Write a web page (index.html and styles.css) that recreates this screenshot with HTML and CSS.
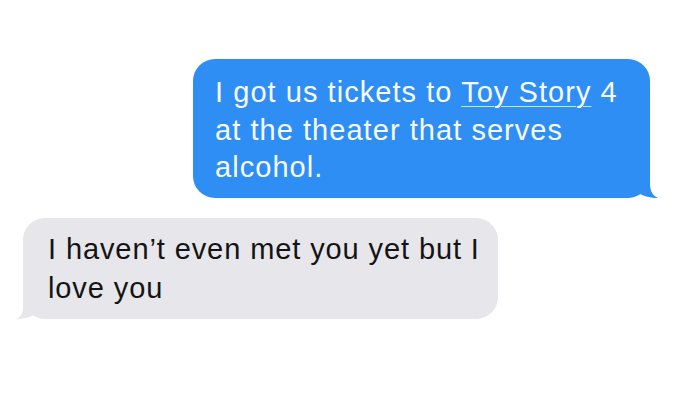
FILE: index.html
```html
<!DOCTYPE html>
<html>
<head>
<meta charset="utf-8">
<link rel="stylesheet" href="styles.css">
</head>
<body>
<div class="thread">
  <div class="bubble out">I got us tickets to <span class="link">Toy Story</span> 4 at the theater that serves alcohol.<svg class="tail tail-out" width="30" height="26" viewBox="0 0 30 26"><path d="M0 0 L22 0 L22 12 C22 19 25 24 30 26 C23 26 15 24 10 21 C7 23 4 25 0 26 Z"/></svg></div>
  <div class="bubble in">I haven’t even met you yet but I love you<svg class="tail tail-in" width="28" height="24" viewBox="0 0 28 24"><path d="M28 0 L8 0 L8 12 C8 18 6 22 1 24 C8 24 15 22 19 20 C22 22 25 23 28 24 Z"/></svg></div>
</div>
</body>
</html>
```
FILE: styles.css
```css
html, body {
  margin: 0;
  padding: 0;
  background: #ffffff;
}
.thread {
  width: 700px;
  height: 405px;
  display: flex;
  flex-direction: column;
  padding-top: 59px;
  box-sizing: border-box;
  font-family: "Liberation Sans", Arial, sans-serif;
  font-size: 29px;
  letter-spacing: 0.9px;
  line-height: 37.5px;
}
.bubble {
  position: relative;
  box-sizing: border-box;
  border-radius: 22px;
}
.out {
  align-self: flex-end;
  margin-right: 50px;
  width: 457px;
  height: 139px;
  padding: 15px 16px 0 22px;
  background: #2e8ef4;
  color: #f7fbff;
  letter-spacing: 1.05px;
}
.link {
  text-decoration: underline;
  text-decoration-thickness: 1px;
  text-underline-offset: 4px;
  text-decoration-color: rgba(255,255,255,0.75);
}
.in {
  align-self: flex-start;
  margin-left: 23px;
  margin-top: 20px;
  width: 475px;
  height: 101px;
  padding: 12px 14px 0 25px;
  background: #e6e6eb;
  color: #141414;
  line-height: 38.5px;
}
.tail {
  position: absolute;
  bottom: 0;
  display: block;
}
.tail-out {
  right: -8px;
  fill: #2e8ef4;
}
.tail-in {
  left: -8px;
  fill: #e6e6eb;
}
```
